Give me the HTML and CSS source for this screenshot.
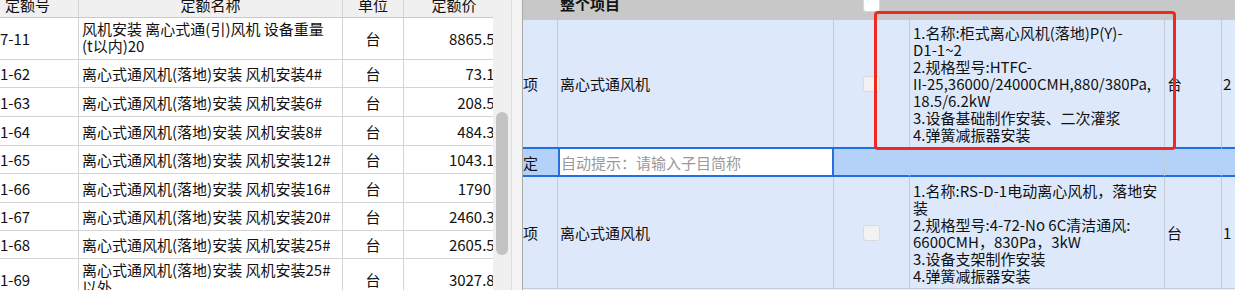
FILE: index.html
```html
<!DOCTYPE html>
<html lang="zh-CN">
<head>
<meta charset="utf-8">
<title>定额</title>
<link rel="stylesheet" href="styles.css">
</head>
<body>
<div class="app">
  <div class="left">
    <div class="ltable">
      <div class="lc lh">定额号</div>
      <div class="lc lh">定额名称</div>
      <div class="lc lh">单位</div>
      <div class="lc lh">定额价</div>

      <div class="lc code">7-11</div>
      <div class="lc name multi">风机安装 离心式通(引)风机 设备重量<br>(t以内)20</div>
      <div class="lc unit">台</div>
      <div class="lc num">8865.59</div>

      <div class="lc code">1-62</div>
      <div class="lc name">离心式通风机(落地)安装 风机安装4#</div>
      <div class="lc unit">台</div>
      <div class="lc num">73.14</div>

      <div class="lc code">1-63</div>
      <div class="lc name">离心式通风机(落地)安装 风机安装6#</div>
      <div class="lc unit">台</div>
      <div class="lc num">208.59</div>

      <div class="lc code">1-64</div>
      <div class="lc name">离心式通风机(落地)安装 风机安装8#</div>
      <div class="lc unit">台</div>
      <div class="lc num">484.32</div>

      <div class="lc code">1-65</div>
      <div class="lc name">离心式通风机(落地)安装 风机安装12#</div>
      <div class="lc unit">台</div>
      <div class="lc num">1043.17</div>

      <div class="lc code">1-66</div>
      <div class="lc name">离心式通风机(落地)安装 风机安装16#</div>
      <div class="lc unit">台</div>
      <div class="lc num num-short">1790</div>

      <div class="lc code">1-67</div>
      <div class="lc name">离心式通风机(落地)安装 风机安装20#</div>
      <div class="lc unit">台</div>
      <div class="lc num">2460.31</div>

      <div class="lc code">1-68</div>
      <div class="lc name">离心式通风机(落地)安装 风机安装25#</div>
      <div class="lc unit">台</div>
      <div class="lc num">2605.52</div>

      <div class="lc code">1-69</div>
      <div class="lc name multi">离心式通风机(落地)安装 风机安装25#<br>以外</div>
      <div class="lc unit">台</div>
      <div class="lc num">3027.81</div>
    </div>
  </div>

  <div class="vscroll"><div class="thumb"></div></div>
  <div class="splitter"></div>

  <div class="right">
    <div class="rtable">
      <div class="rc rh"></div>
      <div class="rc rh"><span class="htext">整个项目</span></div>
      <div class="rc rh"><span class="chk chk-head"></span></div>
      <div class="rc rh"></div>
      <div class="rc rh"></div>
      <div class="rc rh"></div>

      <div class="rc ca">项</div>
      <div class="rc cb">离心式通风机</div>
      <div class="rc cc"><span class="chk"></span></div>
      <div class="rc cd">
        <div class="desc">1.名称:柜式离心风机(落地)P(Y)-<br>D1-1~2<br>2.规格型号:HTFC-<br>II-25,36000/24000CMH,880/380Pa,<br>18.5/6.2kW<br>3.设备基础制作安装、二次灌浆<br>4.弹簧减振器安装</div>
      </div>
      <div class="rc ce">台</div>
      <div class="rc cf">2</div>

      <div class="rc sel ca">定</div>
      <div class="rc sel input"><span class="ph">自动提示：请输入子目简称</span></div>
      <div class="rc sel"></div>
      <div class="rc sel"></div>
      <div class="rc sel"></div>
      <div class="rc sel cf"></div>

      <div class="rc ca last">项</div>
      <div class="rc cb last">离心式通风机</div>
      <div class="rc cc last"><span class="chk"></span></div>
      <div class="rc cd last">
        <div class="desc">1.名称:RS-D-1电动离心风机，落地安<br>装<br>2.规格型号:4-72-No 6C清洁通风:<br>6600CMH，830Pa，3kW<br>3.设备支架制作安装<br>4.弹簧减振器安装</div>
      </div>
      <div class="rc ce last">台</div>
      <div class="rc cf last">1</div>
    </div>
    <div class="highlight"></div>
  </div>
</div>
</body>
</html>
```

FILE: styles.css
```css
* { box-sizing: border-box; }

html, body {
  margin: 0;
  padding: 0;
}

body {
  width: 1235px;
  height: 290px;
  overflow: hidden;
  background: #f2f2f2;
  font-family: "Noto Sans CJK SC", "Noto Sans", sans-serif;
  font-size: 15px;
  line-height: 17px;
  color: #111;
}

.app {
  display: flex;
  height: 290px;
}

/* ---------- left table ---------- */
.left {
  width: 493px;
  flex: none;
  overflow: hidden;
  background: #ffffff;
}

.ltable {
  margin-left: -23px;
  width: 528px;
  display: grid;
  grid-template-columns: 102px 264px 61px 101px;
  grid-template-rows: 18px 42px 28px 29px 29px 28px 29px 28px 28px 42px;
}

.lc {
  border-right: 1px solid #d4d4d4;
  border-bottom: 1px solid #d4d4d4;
  display: flex;
  align-items: center;
  white-space: nowrap;
  overflow: hidden;
}

.lh {
  background: #f0f0f0;
  border-bottom-color: #c9c9c9;
  justify-content: center;
  align-items: flex-start;
  padding-top: 0;
}
.lh::before { content: ""; }
.lh { line-height: 17px; margin-top: 0; }
.lh { padding-bottom: 4px; align-items: flex-end; }

.code {
  padding-left: 23px;
}

.name {
  padding-left: 3px;
}

.name.multi {
  align-items: flex-start;
  padding-top: 2px;
}

.unit {
  justify-content: center;
}

.num {
  justify-content: flex-end;
  padding-right: 1px;
}

.num-short {
  padding-right: 13px;
}

/* ---------- scrollbar + splitter ---------- */
.vscroll {
  width: 18px;
  flex: none;
  background: #f0f0f0;
  padding: 112px 0 0 3px;
}

.thumb {
  width: 12px;
  height: 143px;
  border-radius: 6px;
  background: #c3c3c3;
}

.splitter {
  width: 12px;
  flex: none;
  background: #f3f3f3;
  border-left: 1px solid #dedede;
  border-right: 1px solid #aaaaaa;
}

/* ---------- right table ---------- */
.right {
  flex: 1;
  position: relative;
  overflow: hidden;
}

.rtable {
  width: 760px;
  display: grid;
  grid-template-columns: 35px 276px 76px 255px 57px 61px;
  grid-template-rows: 20px 127px 30px 112px;
}

.rc {
  background: #dde9fb;
  border-right: 1px solid #c3ccd8;
  display: flex;
  align-items: center;
  white-space: nowrap;
  overflow: hidden;
}

.rh {
  background: #c8c8c8;
  border-right: none;
  align-items: flex-start;
  overflow: visible;
}

.htext {
  font-weight: 700;
  margin-top: -5px;
  padding-left: 2px;
}

.ca { padding-left: 0; }
.cb { padding-left: 2px; }
.cc { padding-left: 29px; }
.cd { padding-left: 3px; }
.ce { padding-left: 2px; }
.cf { padding-left: 1px; border-right: none; }

.desc {
  line-height: 17px;
  white-space: nowrap;
}

.chk {
  display: block;
  width: 17px;
  height: 16px;
  border-radius: 3px;
  background: #f2f2f2;
  border: 1px solid #dadada;
}

.chk-head {
  margin: -4px 0 0 29px;
  background: #ffffff;
  border-color: #d8d8d8;
}

.sel {
  background: #b4d2f8;
  border-top: 2px solid #2270e0;
  border-bottom: 2px solid #2270e0;
}

.sel.ca {
  border-right: none;
}

.sel.input {
  background: #ffffff;
  border-left: 2px solid #2270e0;
  border-right: 2px solid #2270e0;
  padding-left: 1px;
}

.ph {
  color: #9a9a9a;
}

.last {
  border-bottom: 1px solid #c3ccd8;
}

.highlight {
  position: absolute;
  left: 351px;
  top: 11px;
  width: 302px;
  height: 139px;
  border: 3px solid #ee2a1f;
  border-radius: 4px;
  pointer-events: none;
}
```
